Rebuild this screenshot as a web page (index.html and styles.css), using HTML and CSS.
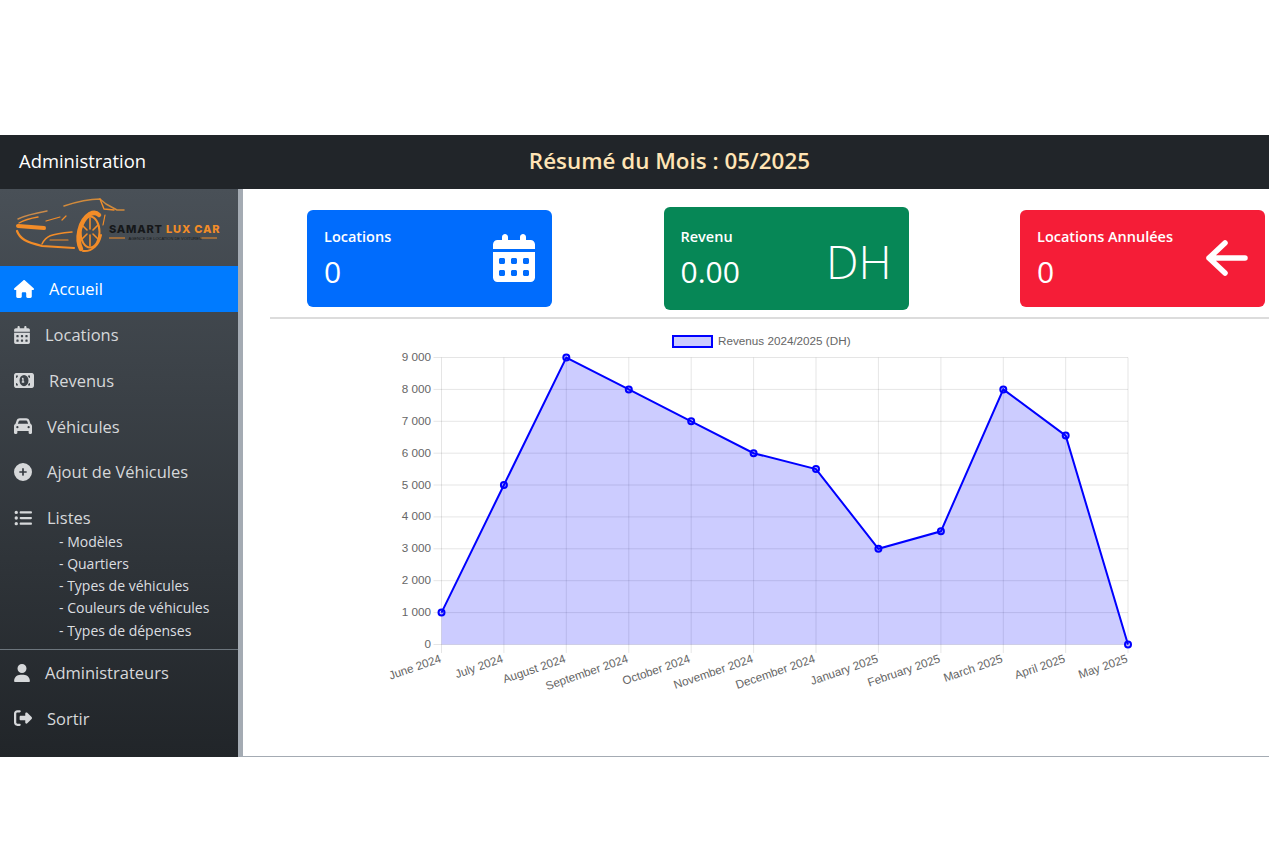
FILE: index.html
```html
<!DOCTYPE html>
<html lang="fr">
<head>
    <meta charset="UTF-8">
    <meta name="viewport" content="width=device-width, initial-scale=1.0">
    <title>Administration</title>
    <link rel="stylesheet" href="styles.css">
</head>
<body>
    <!--barre du haut-->
    <header class="topbar">
        <span class="brand">Administration</span>
        <h1 class="month-title">Résumé du Mois : 05/2025</h1>
    </header>

    <div class="layout">
        <!--menu de gauche-->
        <aside class="sidebar">
            <div class="logo">
                <svg width="238" height="77" viewBox="0 0 238 77">
                    <g fill="none" stroke="#f28c28" stroke-linecap="round" stroke-linejoin="round">
                        <path d="M18 30C26 26 36 24 47 22" stroke="#c98a4a" stroke-width="1.5"/>
                        <path d="M19 34C26 30 32 29 38 28" stroke-width="1.4"/>
                        <path d="M64 17C76 13 88 10 100 10L106 15L117 21L124 21" stroke="#d08a3c" stroke-width="1.5"/>
                        <path d="M100 10L104 20L114 21" stroke-width="1.4"/>
                        <path d="M18 37L44 39" stroke-width="4"/>
                        <path d="M17 42C20 50 26 53 42 57L74 59" stroke-width="2.2"/>
                        <path d="M42 55C46 47 50 45 72 43" stroke-width="1.5"/>
                        <path d="M50 51H68M46 32L60 28M62 31L66 27" stroke-width="1.2"/>
                        <path d="M81 60C76 50 79 32 90 25C94 23 97 24 99 26" stroke-width="4.5"/>
                        <ellipse cx="90" cy="43" rx="9.5" ry="15.5" stroke-width="2"/>
                        <path d="M90 29V40M90 46V57M82 36L87 41M98 36L93 41M82 50L87 45M98 50L93 45" stroke-width="1.6"/>
                        <path d="M83 62C92 63 99 56 101 46" stroke-width="2"/>
                        <path d="M105 26L103 36" stroke-width="1.2"/>
                    </g>
                    <text class="logo-name" x="109" y="43.5">SAMART <tspan fill="#f28c28">LUX CAR</tspan></text>
                    <path d="M109 49H125M200 49H217" stroke="#f28c28" stroke-width="1"/>
                    <text class="logo-sub" x="128.5" y="50.5">AGENCE DE LOCATION DE VOITURES</text>
                </svg>
            </div>

            <nav class="menu">
                <a class="menu-item active" href="#">
                    <svg width="20" height="18" viewBox="0 0 576 512"><path d="M575.8 255.5c0 18-15 32.1-32 32.1h-32l.7 160.2c0 2.7-.2 5.4-.5 8.1V472c0 22.1-17.9 40-40 40H456c-1.1 0-2.2 0-3.3-.1c-1.4 .1-2.8 .1-4.2 .1H416 392c-22.1 0-40-17.9-40-40V448 384c0-17.7-14.3-32-32-32H256c-17.7 0-32 14.3-32 32v64 24c0 22.1-17.9 40-40 40H160 128.1c-1.5 0-3-.1-4.5-.2c-1.2 .1-2.4 .2-3.6 .2H104c-22.1 0-40-17.9-40-40V360c0-.9 0-1.9 .1-2.8V287.6H32c-18 0-32-14-32-32.1c0-9 3-17 10-24L266.4 8c7-7 15-8 22-8s15 2 21 7L564.8 231.5c8 7 12 15 11 24z"/></svg>
                    Accueil
                </a>
                <a class="menu-item" href="#">
                    <svg width="16" height="18" viewBox="0 0 448 512"><path d="M128 0c17.7 0 32 14.3 32 32V64H288V32c0-17.7 14.3-32 32-32s32 14.3 32 32V64h48c26.5 0 48 21.5 48 48v48H0V112C0 85.5 21.5 64 48 64H96V32c0-17.7 14.3-32 32-32zM0 192H448V464c0 26.5-21.5 48-48 48H48c-26.5 0-48-21.5-48-48V192zm64 80v32c0 8.8 7.2 16 16 16h32c8.8 0 16-7.2 16-16V272c0-8.8-7.2-16-16-16H80c-8.8 0-16 7.2-16 16zm128 0v32c0 8.8 7.2 16 16 16h32c8.8 0 16-7.2 16-16V272c0-8.8-7.2-16-16-16H208c-8.8 0-16 7.2-16 16zm144-16c-8.8 0-16 7.2-16 16v32c0 8.8 7.2 16 16 16h32c8.8 0 16-7.2 16-16V272c0-8.8-7.2-16-16-16H336zM64 400v32c0 8.8 7.2 16 16 16h32c8.8 0 16-7.2 16-16V400c0-8.8-7.2-16-16-16H80c-8.8 0-16 7.2-16 16zm144-16c-8.8 0-16 7.2-16 16v32c0 8.8 7.2 16 16 16h32c8.8 0 16-7.2 16-16V400c0-8.8-7.2-16-16-16H208zm112 16v32c0 8.8 7.2 16 16 16h32c8.8 0 16-7.2 16-16V400c0-8.8-7.2-16-16-16H336c-8.8 0-16 7.2-16 16z"/></svg>
                    Locations
                </a>
                <a class="menu-item" href="#">
                    <svg width="20" height="15" viewBox="0 64 640 384" preserveAspectRatio="none"><path d="M64 64C28.7 64 0 92.7 0 128V384c0 35.3 28.7 64 64 64H576c35.3 0 64-28.7 64-64V128c0-35.3-28.7-64-64-64H64zm64 320H64V320c35.3 0 64 28.7 64 64zM64 192V128h64c0 35.3-28.7 64-64 64zM448 384c0-35.3 28.7-64 64-64v64H448zm64-192c-35.3 0-64-28.7-64-64h64v64zM176 256a144 144 0 1 1 288 0 144 144 0 1 1 -288 0zm76-48c0 9.7 6.9 17.7 16 19.6V276h-4c-11 0-20 9-20 20s9 20 20 20h24 24c11 0 20-9 20-20s-9-20-20-20h-4V208c0-11-9-20-20-20H272c-11 0-20 9-20 20z"/></svg>
                    Revenus
                </a>
                <a class="menu-item" href="#">
                    <svg width="18" height="18" viewBox="0 0 512 512"><path d="M135.2 117.4L109.1 192H402.9l-26.1-74.6C372.3 104.6 360.2 96 346.6 96H165.4c-13.6 0-25.7 8.6-30.2 21.4zM39.6 196.8L74.8 96.3C88.3 57.8 124.6 32 165.4 32H346.6c40.8 0 77.1 25.8 90.6 64.3l35.2 100.5c23.2 9.6 39.6 32.5 39.6 59.2V400v48c0 17.7-14.3 32-32 32H448c-17.7 0-32-14.3-32-32V400H96v48c0 17.7-14.3 32-32 32H32c-17.7 0-32-14.3-32-32V400 256c0-26.7 16.4-49.6 39.6-59.2zM128 288a32 32 0 1 0 -64 0 32 32 0 1 0 64 0zm288 32a32 32 0 1 0 0-64 32 32 0 1 0 0 64z"/></svg>
                    Véhicules
                </a>
                <a class="menu-item" href="#">
                    <svg width="18" height="18" viewBox="0 0 512 512"><path d="M256 512A256 256 0 1 0 256 0a256 256 0 1 0 0 512zM232 344V280H168c-13.3 0-24-10.7-24-24s10.7-24 24-24h64V168c0-13.3 10.7-24 24-24s24 10.7 24 24v64h64c13.3 0 24 10.7 24 24s-10.7 24-24 24H280v64c0 13.3-10.7 24-24 24s-24-10.7-24-24z"/></svg>
                    Ajout de Véhicules
                </a>
                <a class="menu-item" href="#">
                    <svg width="18" height="18" viewBox="0 0 512 512"><path d="M64 144a48 48 0 1 0 0-96 48 48 0 1 0 0 96zM192 64c-17.7 0-32 14.3-32 32s14.3 32 32 32H480c17.7 0 32-14.3 32-32s-14.3-32-32-32H192zm0 160c-17.7 0-32 14.3-32 32s14.3 32 32 32H480c17.7 0 32-14.3 32-32s-14.3-32-32-32H192zm0 160c-17.7 0-32 14.3-32 32s14.3 32 32 32H480c17.7 0 32-14.3 32-32s-14.3-32-32-32H192zM64 464a48 48 0 1 0 0-96 48 48 0 1 0 0 96zm48-208a48 48 0 1 0 -96 0 48 48 0 1 0 96 0z"/></svg>
                    Listes
                </a>
                <ul class="submenu">
                    <li>- Modèles</li>
                    <li>- Quartiers</li>
                    <li>- Types de véhicules</li>
                    <li>- Couleurs de véhicules</li>
                    <li>- Types de dépenses</li>
                </ul>
                <a class="menu-item" href="#">
                    <svg width="16" height="18" viewBox="0 0 448 512"><path d="M224 256A128 128 0 1 0 224 0a128 128 0 1 0 0 256zm-45.7 48C79.8 304 0 383.8 0 482.3C0 498.7 13.3 512 29.7 512H418.3c16.4 0 29.7-13.3 29.7-29.7C448 383.8 368.2 304 269.7 304H178.3z"/></svg>
                    Administrateurs
                </a>
                <a class="menu-item" href="#">
                    <svg width="18" height="18" viewBox="0 0 512 512"><path d="M377.9 105.9L500.7 228.7c7.2 7.2 11.3 17.1 11.3 27.3s-4.1 20.1-11.3 27.3L377.9 406.1c-6.4 6.4-15 9.9-24 9.9c-18.7 0-33.9-15.2-33.9-33.9l0-62.1-128 0c-17.7 0-32-14.3-32-32l0-64c0-17.7 14.3-32 32-32l128 0 0-62.1c0-18.7 15.2-33.9 33.9-33.9c9 0 17.6 3.6 24 9.9zM160 96L96 96c-17.7 0-32 14.3-32 32l0 256c0 17.7 14.3 32 32 32l64 0c17.7 0 32 14.3 32 32s-14.3 32-32 32l-64 0c-53 0-96-43-96-96L0 128C0 75 43 32 96 32l64 0c17.7 0 32 14.3 32 32s-14.3 32-32 32z"/></svg>
                    Sortir
                </a>
            </nav>
        </aside>

        <main class="content">
            <!--les trois cartes-->
            <section class="cards">
                <div class="card card-blue">
                    <div class="card-text">
                        <div class="card-label">Locations</div>
                        <div class="card-value">0</div>
                    </div>
                    <svg class="card-icon" width="42" height="48" viewBox="0 0 448 512"><path fill="#fff" d="M128 0c17.7 0 32 14.3 32 32V64H288V32c0-17.7 14.3-32 32-32s32 14.3 32 32V64h48c26.5 0 48 21.5 48 48v48H0V112C0 85.5 21.5 64 48 64H96V32c0-17.7 14.3-32 32-32zM0 192H448V464c0 26.5-21.5 48-48 48H48c-26.5 0-48-21.5-48-48V192zm64 80v32c0 8.8 7.2 16 16 16h32c8.8 0 16-7.2 16-16V272c0-8.8-7.2-16-16-16H80c-8.8 0-16 7.2-16 16zm128 0v32c0 8.8 7.2 16 16 16h32c8.8 0 16-7.2 16-16V272c0-8.8-7.2-16-16-16H208c-8.8 0-16 7.2-16 16zm144-16c-8.8 0-16 7.2-16 16v32c0 8.8 7.2 16 16 16h32c8.8 0 16-7.2 16-16V272c0-8.8-7.2-16-16-16H336zM64 400v32c0 8.8 7.2 16 16 16h32c8.8 0 16-7.2 16-16V400c0-8.8-7.2-16-16-16H80c-8.8 0-16 7.2-16 16zm144-16c-8.8 0-16 7.2-16 16v32c0 8.8 7.2 16 16 16h32c8.8 0 16-7.2 16-16V400c0-8.8-7.2-16-16-16H208zm112 16v32c0 8.8 7.2 16 16 16h32c8.8 0 16-7.2 16-16V400c0-8.8-7.2-16-16-16H336c-8.8 0-16 7.2-16 16z"/></svg>
                </div>
                <div class="card card-green">
                    <div class="card-text">
                        <div class="card-label">Revenu</div>
                        <div class="card-value">0.00</div>
                    </div>
                    <div class="card-unit">DH</div>
                </div>
                <div class="card card-red">
                    <div class="card-text">
                        <div class="card-label">Locations Annulées</div>
                        <div class="card-value">0</div>
                    </div>
                    <svg class="card-icon" width="42" height="36" viewBox="0 0 42 36"><path d="M3 18H39M19 3L3 18L19 33" fill="none" stroke="#fff" stroke-width="5.5" stroke-linecap="round" stroke-linejoin="round"/></svg>
                </div>
            </section>

            <!--graphique des revenus-->
            <svg class="chart" width="760" height="370" viewBox="380 325 760 370">
                <rect class="legend-box" x="673" y="336" width="39" height="11"/>
                <text class="legend-text" x="718" y="345">Revenus 2024/2025 (DH)</text>

                <path class="grid" d="M433.5 357.5H1128M433.5 389.4H1128M433.5 421.3H1128M433.5 453.2H1128M433.5 485H1128M433.5 516.9H1128M433.5 548.8H1128M433.5 580.7H1128M433.5 612.6H1128M433.5 644.5H1128"/>
                <path class="grid" d="M441.5 357.5V653M503.9 357.5V653M566.3 357.5V653M628.8 357.5V653M691.2 357.5V653M753.6 357.5V653M816 357.5V653M878.4 357.5V653M940.9 357.5V653M1003.3 357.5V653M1065.7 357.5V653M1128 357.5V653"/>

                <g class="y-labels">
                    <text x="431" y="361">9 000</text>
                    <text x="431" y="393">8 000</text>
                    <text x="431" y="425">7 000</text>
                    <text x="431" y="457">6 000</text>
                    <text x="431" y="489">5 000</text>
                    <text x="431" y="520">4 000</text>
                    <text x="431" y="552">3 000</text>
                    <text x="431" y="584">2 000</text>
                    <text x="431" y="616">1 000</text>
                    <text x="431" y="648">0</text>
                </g>

                <g class="x-labels">
                    <text transform="translate(442 662) rotate(-19)">June 2024</text>
                    <text transform="translate(504 662) rotate(-19)">July 2024</text>
                    <text transform="translate(566.5 662) rotate(-19)">August 2024</text>
                    <text transform="translate(629 662) rotate(-19)">September 2024</text>
                    <text transform="translate(691 662) rotate(-19)">October 2024</text>
                    <text transform="translate(754 662) rotate(-19)">November 2024</text>
                    <text transform="translate(816 662) rotate(-19)">December 2024</text>
                    <text transform="translate(879 662) rotate(-19)">January 2025</text>
                    <text transform="translate(941 662) rotate(-19)">February 2025</text>
                    <text transform="translate(1003.5 662) rotate(-19)">March 2025</text>
                    <text transform="translate(1066 662) rotate(-19)">April 2025</text>
                    <text transform="translate(1128.5 662) rotate(-19)">May 2025</text>
                </g>

                <path class="area" d="M441.5 612.6L503.9 485L566.3 357.5L628.8 389.4L691.2 421.3L753.6 453.2L816 469.1L878.4 548.8L940.9 531.3L1003.3 389.4L1065.7 435.6L1128 644.5L441.5 644.5Z"/>
                <path class="line" d="M441.5 612.6L503.9 485L566.3 357.5L628.8 389.4L691.2 421.3L753.6 453.2L816 469.1L878.4 548.8L940.9 531.3L1003.3 389.4L1065.7 435.6L1128 644.5"/>
                <g class="points">
                    <circle cx="441.5" cy="612.6" r="3"/>
                    <circle cx="503.9" cy="485" r="3"/>
                    <circle cx="566.3" cy="357.5" r="3"/>
                    <circle cx="628.8" cy="389.4" r="3"/>
                    <circle cx="691.2" cy="421.3" r="3"/>
                    <circle cx="753.6" cy="453.2" r="3"/>
                    <circle cx="816" cy="469.1" r="3"/>
                    <circle cx="878.4" cy="548.8" r="3"/>
                    <circle cx="940.9" cy="531.3" r="3"/>
                    <circle cx="1003.3" cy="389.4" r="3"/>
                    <circle cx="1065.7" cy="435.6" r="3"/>
                    <circle cx="1128" cy="644.5" r="3"/>
                </g>
            </svg>
        </main>
    </div>
</body>
</html>
```

FILE: styles.css
```css
*{
    margin:0;
    padding:0;
    box-sizing:border-box;
}
body{
    padding-top:135px;
    background-color:#fff;
    font-family:"Open Sans","Noto Sans",sans-serif;
}

/*barre du haut*/
.topbar{
    height:54px;
    background-color:#212529;
    display:flex;
    align-items:center;
    justify-content:space-between;
    padding:0 459px 3px 19px;
}
.brand{
    color:#fff;
    font-size:18.4px;
}
.month-title{
    color:#ffe4b5;
    font-size:22.4px;
    font-weight:600;
}

.layout{
    display:flex;
    height:568px;
}

/*menu de gauche*/
.sidebar{
    width:243px;
    flex:none;
    background:linear-gradient(#495057,#212529) no-repeat;
    background-size:238px 100%;
    border-right:5px solid #a4abb3;
}
.logo{
    height:77px;
}
.logo svg{
    display:block;
}
.logo-name{
    font-family:"Inter","Open Sans",sans-serif;
    font-size:11px;
    font-weight:800;
    letter-spacing:.8px;
    fill:#16181a;
}
.logo-sub{
    font-family:"Liberation Sans",sans-serif;
    font-size:4px;
    fill:#16181a;
}
.menu-item{
    height:45.75px;
    display:flex;
    align-items:center;
    gap:15px;
    padding-left:14px;
    color:#d6d8da;
    fill:#d6d8da;
    font-size:16.5px;
    text-decoration:none;
}
.menu-item.active{
    background-color:#007bff;
    color:#fff;
    fill:#fff;
}
.submenu{
    list-style:none;
    margin-top:-10px;
    padding:0 0 7px 59px;
    border-bottom:1px solid #6c757d;
    color:#dcdee0;
    font-size:14px;
    line-height:22.25px;
}

/*contenu*/
.content{
    flex:1;
    border-bottom:1px solid #a4abb3;
}
.cards{
    height:130px;
    margin-left:27px;
    padding:18px 4px 8px 37px;
    display:flex;
    align-items:center;
    justify-content:space-between;
    border-bottom:2px solid #dcdcdc;
}
.card{
    width:245px;
    height:97px;
    border-radius:6px;
    padding:0 17px;
    color:#fff;
    display:flex;
    align-items:center;
    justify-content:space-between;
}
.card-blue{
    background-color:#006cfd;
}
.card-green{
    height:103px;
    background-color:#068756;
}
.card-red{
    background-color:#f51d37;
}
.card-text{
    padding-top:3px;
}
.card-label{
    font-size:14.5px;
    font-weight:600;
    margin-bottom:6px;
}
.card-value{
    font-size:30px;
    font-weight:500;
    line-height:40px;
}
.card-unit{
    font-size:46px;
    font-weight:300;
    margin-top:6px;
}

/*graphique*/
.chart{
    display:block;
    margin:6px 0 0 137px;
    font-family:"Liberation Sans",Arial,sans-serif;
    font-size:11.7px;
}
.grid{
    fill:none;
    stroke:rgba(0,0,0,.1);
}
.legend-box{
    fill:rgba(0,0,255,.2);
    stroke:#00f;
    stroke-width:2px;
}
.legend-text,
.y-labels text,
.x-labels text{
    fill:#666;
}
.y-labels text,
.x-labels text{
    text-anchor:end;
}
.area{
    fill:rgba(0,0,255,.2);
}
.line{
    fill:none;
    stroke:#00f;
    stroke-width:2px;
}
.points circle{
    fill:rgba(0,0,255,.2);
    stroke:#00f;
    stroke-width:2px;
}
```
